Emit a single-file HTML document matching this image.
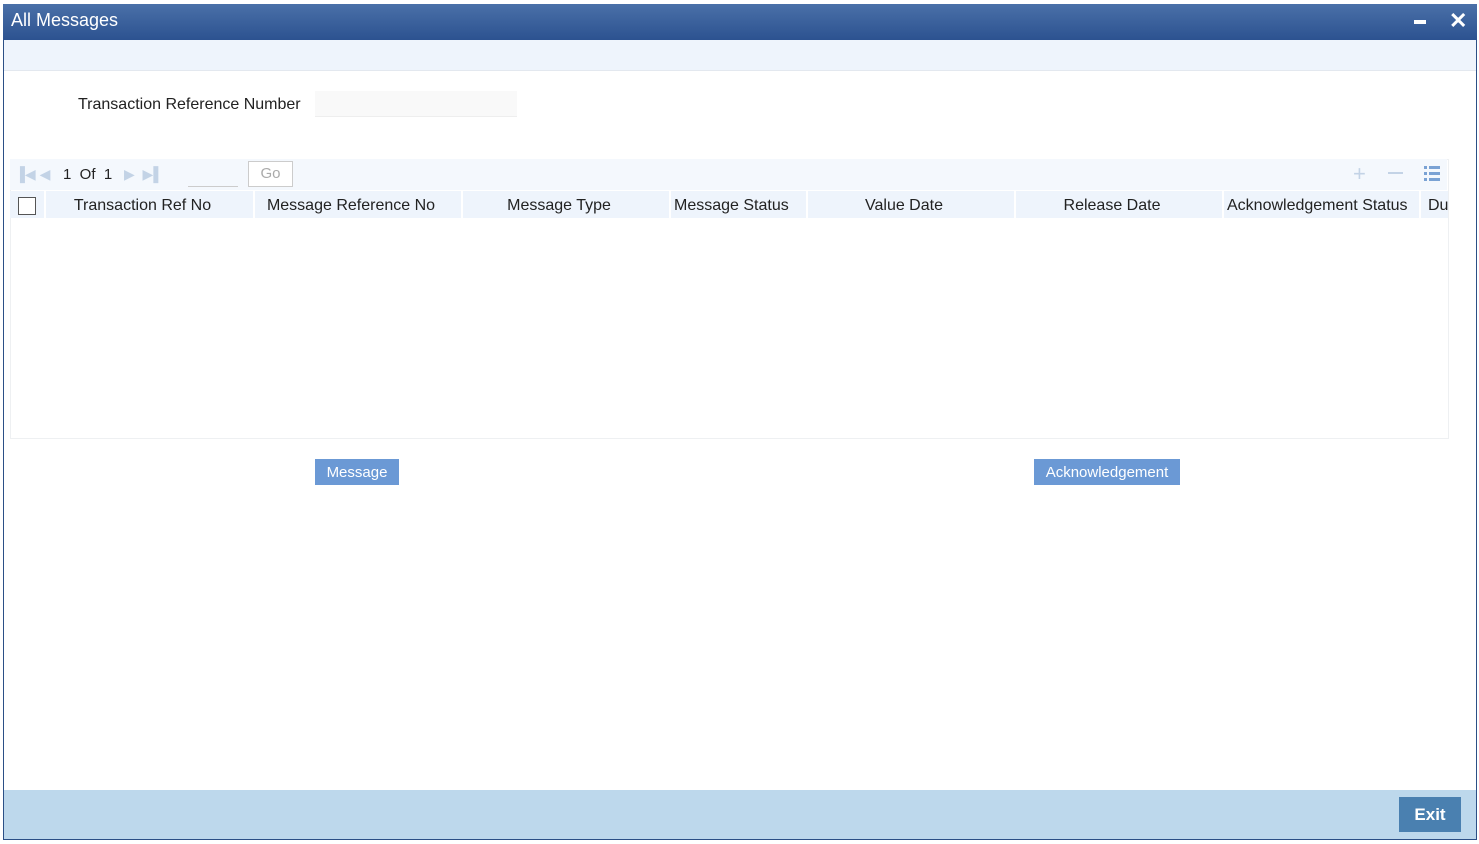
<!DOCTYPE html>
<html><head><style>
*{margin:0;padding:0;box-sizing:border-box}
body{width:1479px;height:844px;background:#fff;font-family:"Liberation Sans",Arial,sans-serif;position:relative;overflow:hidden}
.a{position:absolute}
.win{left:3px;top:4px;width:1474px;height:836px;border:1px solid #2b4f86;background:#fff}
.title{left:3px;top:4px;width:1474px;height:36px;background:linear-gradient(#4a70a8,#2c5290);color:#fff;font-size:18px;line-height:32px;padding-left:8px}
.sub{left:4px;top:40px;width:1472px;height:31px;background:#eef4fc;border-bottom:1px solid #e3e8ef}
.lbl{font-size:16px;color:#222}
.hdr{top:191px;height:27px;background:#eef4fc;font-size:16px;color:#222;line-height:30px;text-align:center;border-right:1px solid #fff;padding-right:14px;white-space:nowrap;overflow:hidden}
.btn{background:#6b99d5;color:#fff;font-size:15px;text-align:center;line-height:26px;height:26px}
</style></head><body>
<div class="a win"></div>
<div class="a title">All Messages</div>
<div class="a" style="left:1414px;top:20px;width:12px;height:4px;background:#fff"></div>
<div class="a" style="left:1449px;top:8px;color:#fff;font-size:22px;font-weight:bold">✕</div>
<div class="a sub"></div>
<div class="a lbl" style="left:78px;top:96px">Transaction Reference Number</div>
<div class="a" style="left:315px;top:91px;width:202px;height:26px;background:#f9f9f9;border-bottom:1px solid #eee"></div>
<div class="a" style="left:10px;top:159px;width:1439px;height:280px;border:1px solid #eef0f2"></div>
<div class="a" style="left:10px;top:159px;width:1437px;height:31px;background:#f4f8fd"></div>
<div class="a" style="left:15px;top:166px;color:#c3d3e6;font-size:14px">▐◀ ◀</div>
<div class="a lbl" style="left:63px;top:166px;font-size:15px">1 &nbsp;Of &nbsp;1</div>
<div class="a" style="left:124px;top:166px;color:#c3d3e6;font-size:14px">▶ &nbsp;▶▌</div>
<div class="a" style="left:188px;top:186px;width:50px;height:1px;background:#ccc"></div>
<div class="a" style="left:248px;top:161px;width:45px;height:26px;border:1px solid #ccc;color:#aaa;font-size:15px;text-align:center;line-height:24px;background:#fff">Go</div>
<div class="a" style="left:1353px;top:161px;color:#c3d3e6;font-size:22px">+</div>
<div class="a" style="left:1388px;top:172px;width:15px;height:2px;background:#c3d3e6"></div>
<svg class="a" style="left:1424px;top:166px" width="16" height="15"><g fill="#7aa2d4"><rect x="0" y="0" width="3" height="3"/><rect x="5" y="0" width="11" height="3"/><rect x="0" y="6" width="3" height="3"/><rect x="5" y="6" width="11" height="3"/><rect x="0" y="12" width="3" height="3"/><rect x="5" y="12" width="11" height="3"/></g></svg>
<div class="a hdr" style="left:10px;width:35px"></div>
<div class="a" style="left:18px;top:197px;width:18px;height:18px;border:1px solid #555;background:#fff"></div>
<div class="a hdr" style="left:46px;width:208px">Transaction Ref No</div>
<div class="a hdr" style="left:255px;width:207px">Message Reference No</div>
<div class="a hdr" style="left:463px;width:207px">Message Type</div>
<div class="a hdr" style="left:671px;width:136px;text-align:left;padding-left:3px;padding-right:0">Message Status</div>
<div class="a hdr" style="left:808px;width:207px">Value Date</div>
<div class="a hdr" style="left:1016px;width:207px">Release Date</div>
<div class="a hdr" style="left:1224px;width:196px;text-align:left;padding-left:3px;padding-right:0">Acknowledgement Status</div>
<div class="a hdr" style="left:1421px;width:27px;text-align:left;padding-left:7px;padding-right:0;border:none">Du</div>
<div class="a btn" style="left:315px;top:459px;width:84px;line-height:27px">Message</div>
<div class="a btn" style="left:1034px;top:459px;width:146px;line-height:27px">Acknowledgement</div>
<div class="a" style="left:4px;top:790px;width:1472px;height:49px;background:#bdd8ec"></div>
<div class="a" style="left:1399px;top:797px;width:62px;height:35px;background:#4a80b0;color:#fff;font-weight:bold;font-size:17px;text-align:center;line-height:35px">Exit</div>
</body></html>
